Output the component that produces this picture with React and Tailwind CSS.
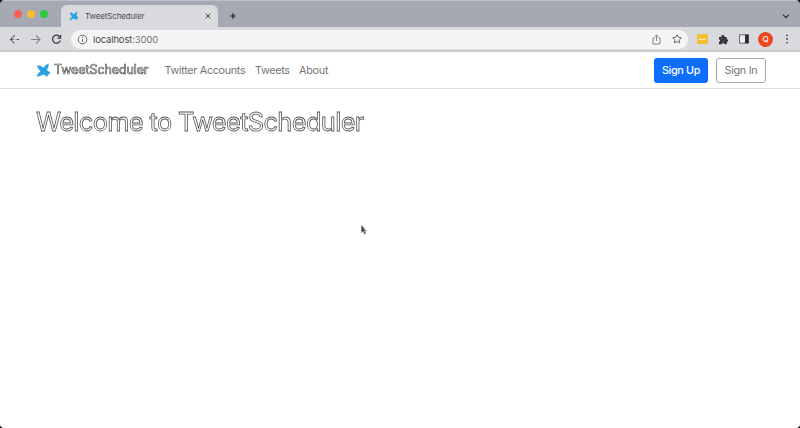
import React from "react";
import { Star } from "lucide-react";

function Bird({ className }) {
  return (
    <svg viewBox="0 0 15 15" className={className} fill="#2aa3e2">
      <path d="M1 2.6 L4.2 2.6 L7.4 4.8 Q9.5 1.6 12.9 .6 Q12.6 4.3 11 7 Q11.9 8.5 14 9 L14 10.5 Q12.2 10.8 11.2 13.5 L10 13.5 Q9.3 11.8 7.5 11.4 Q4 13 0.4 13.8 Q1.6 10.6 4.5 8.1 Q1.9 6 1 2.6Z" />
    </svg>
  );
}

function TabStrip() {
  return (
    <div className="flex h-[27px] border-t border-[#bdc0c8] bg-[#a6a9b3] pt-[4px]">
      <div className="flex w-[61px] gap-[6px] pl-[14px] pt-[5px]">
        <i className="size-[8px] rounded-full bg-[#fa6059]" />
        <i className="-ml-px size-[8px] rounded-full bg-[#f8bb32]" />
        <i className="-ml-px size-[8px] rounded-full bg-[#2bc840]" />
      </div>
      <div className="flex h-[22px] w-[157px] items-center rounded-t-[6px] bg-[#d9dadd] pl-[8px] pr-[6px]">
        <Bird className="size-[10px]" />
        <span className="ml-[6px] flex-1 text-[8px] leading-none tracking-[-0.15px] text-[#4c4d51]">TweetScheduler</span>
        <svg className="size-[8px]" viewBox="0 0 8 8" stroke="#44464b" strokeWidth="1">
          <path d="M1.6 1.6l4.8 4.8M6.4 1.6l-4.8 4.8" />
        </svg>
      </div>
      <svg className="ml-[11px] mt-[7px] size-[8px]" viewBox="0 0 8 8" stroke="#22242a" strokeWidth="1.2">
        <path d="M1.2 4h5.6M4 1.2v5.6" />
      </svg>
      <svg className="ml-auto mr-[10px] mt-[7px] size-[8px]" viewBox="0 0 8 8" fill="none" stroke="#26282d" strokeWidth="1.1">
        <path d="M1 2.6l3 3 3-3" />
      </svg>
    </div>
  );
}

function Toolbar() {
  return (
    <div className="flex h-[25px] items-center border-b-2 border-[#cbcdd1] bg-[#d9dadd] pt-px">
      <svg className="ml-[9px] size-[11px]" viewBox="0 0 11 11" fill="none" stroke="#424449" strokeWidth="1.1">
        <path d="M10 5.5H6.8M5.5 1.5l-4 4 4 4M1.5 5.5h3.5" strokeDasharray="2 .7" />
      </svg>
      <svg className="ml-[10px] size-[11px]" viewBox="0 0 11 11" fill="none" stroke="#85878b" strokeWidth="1.1">
        <path d="M1 5.5h9M6 1.5l4 4-4 4" />
      </svg>
      <svg className="ml-[10px] size-[11px]" viewBox="0 0 11 11" fill="none" stroke="#35373b" strokeWidth="1.2">
        <path d="M8.8 2.8A4 4 0 1 0 9.4 6.3M9.6 1v3.2H6.4" />
      </svg>
      <div className="ml-[9px] flex h-[19px] w-[617px] items-center rounded-full bg-[#f5f5f6] pl-[6px] pr-[6px]">
        <svg className="size-[11px]" viewBox="0 0 11 11" fill="none" stroke="#66686c" strokeWidth="1">
          <circle cx="5.5" cy="5.5" r="4.3" />
          <path d="M5.5 5v3M5.5 2.8v1.1" />
        </svg>
        <span className="ml-[5px] pt-px text-[9.5px] leading-none tracking-[-0.15px] text-[#46484c]">
          localhost<span className="text-[#727477]">:3000</span>
        </span>
        <svg className="ml-auto size-[11px]" viewBox="0 0 11 11" fill="none" stroke="#777" strokeWidth=".9">
          <path d="M3.8 4H2v6h7V4H7.2M5.5 7V1M3.7 2.8L5.5 1l1.8 1.8" />
        </svg>
        <Star className="ml-[10px] size-[10px] text-[#5d5e61]" strokeWidth={2.4} />
      </div>
      <svg className="ml-[9px] h-[10px] w-[11px]" viewBox="0 0 11 10">
        <rect width="11" height="10" rx=".7" fill="#f5bd35" />
        <path d="M1.7 5.4h7.6" stroke="#fff3cf" strokeWidth="1.2" strokeDasharray="1.4 .5" />
      </svg>
      <svg className="ml-[10px] size-[11px]" viewBox="0 0 11 11" fill="#303236">
        <path d="M1 3h2.5A1.5 1.5 0 1 1 6.3 3H8.7v2.2a1.4 1.4 0 1 1 0 2.8v2.3H6.4a1.2 1.2 0 0 0-2.4 0H1V7.8a1.2 1.2 0 0 0 0-2.4z" />
        <path d="M3 4.8h1M5.5 6.2h1M3.8 7.7h1" stroke="#bbb" strokeWidth=".7" />
      </svg>
      <svg className="ml-[10px] h-[10px] w-[10px]" viewBox="0 0 10 10">
        <rect x=".5" y=".8" width="9" height="8.4" fill="#eee" stroke="#44464a" strokeDasharray="1.5 .4" />
        <path d="M6 .8h3.6v8.4H6z" fill="#292b2f" />
      </svg>
      <div className="ml-[9px] flex size-[15px] items-center justify-center rounded-full bg-[#ed4622] text-[8px] font-medium leading-none text-white">Q</div>
      <svg className="ml-[10px] h-[10px] w-[8px]" viewBox="0 0 8 10" fill="#44464a">
        <circle cx="4" cy="1.4" r=".9" />
        <circle cx="4" cy="5" r=".9" />
        <circle cx="4" cy="8.6" r=".9" />
      </svg>
    </div>
  );
}

export default function App() {
  return (
    <div className="h-[428px] w-[800px] bg-black font-['Inter','Liberation_Sans',sans-serif] antialiased">
      <div className="relative h-full overflow-hidden rounded-t-[5px] rounded-b-[4px] bg-white">
        <TabStrip />
        <Toolbar />
        <nav className="flex h-[37px] items-center border-b border-[#dedede] pl-[36px] pr-[34px] text-[10.75px] leading-none text-[#727477]">
          <Bird className="size-[15px]" />
          <span className="ml-[3px] w-[110.5px] whitespace-nowrap pt-px text-[12.5px] tracking-[-0.1px] text-[#eeeeee] will-change-transform [-webkit-text-stroke:0.6px_#4c4c4c]">TweetScheduler</span>
          <span className="w-[90.5px] whitespace-nowrap pt-[2px] tracking-[-0.3px]">Twitter Accounts</span>
          <span className="w-[44px] pt-[2px] tracking-[-0.3px]">Tweets</span>
          <span className="pt-[2px] tracking-[-0.2px]">About</span>
          <button className="ml-auto h-[25px] w-[54px] rounded-[3px] bg-[#0d6efd] pt-[2px] font-medium tracking-[-0.3px] text-white">Sign Up</button>
          <button className="ml-[8px] h-[25px] w-[50px] rounded-[3px] border border-[#a5a7aa] pt-[2px] tracking-[-0.25px]">Sign In</button>
        </nav>
        <h1 className="ml-[36px] mt-[17px] whitespace-nowrap text-[25.5px] leading-[31px] tracking-[-0.7px] text-white will-change-transform [-webkit-text-stroke:0.8px_#555555]">Welcome to TweetScheduler</h1>
        <svg className="absolute left-[360px] top-[224px] h-[12px] w-[8px]" viewBox="0 0 8 12">
          <path d="M1.3 1v8l1.9-1.7 1.3 3 1.3-.6-1.2-2.8h2z" fill="#222" stroke="#bbb" strokeWidth=".7" />
          <path d="M3 4.5l2 2" stroke="#ddd" />
        </svg>
      </div>
    </div>
  );
}
